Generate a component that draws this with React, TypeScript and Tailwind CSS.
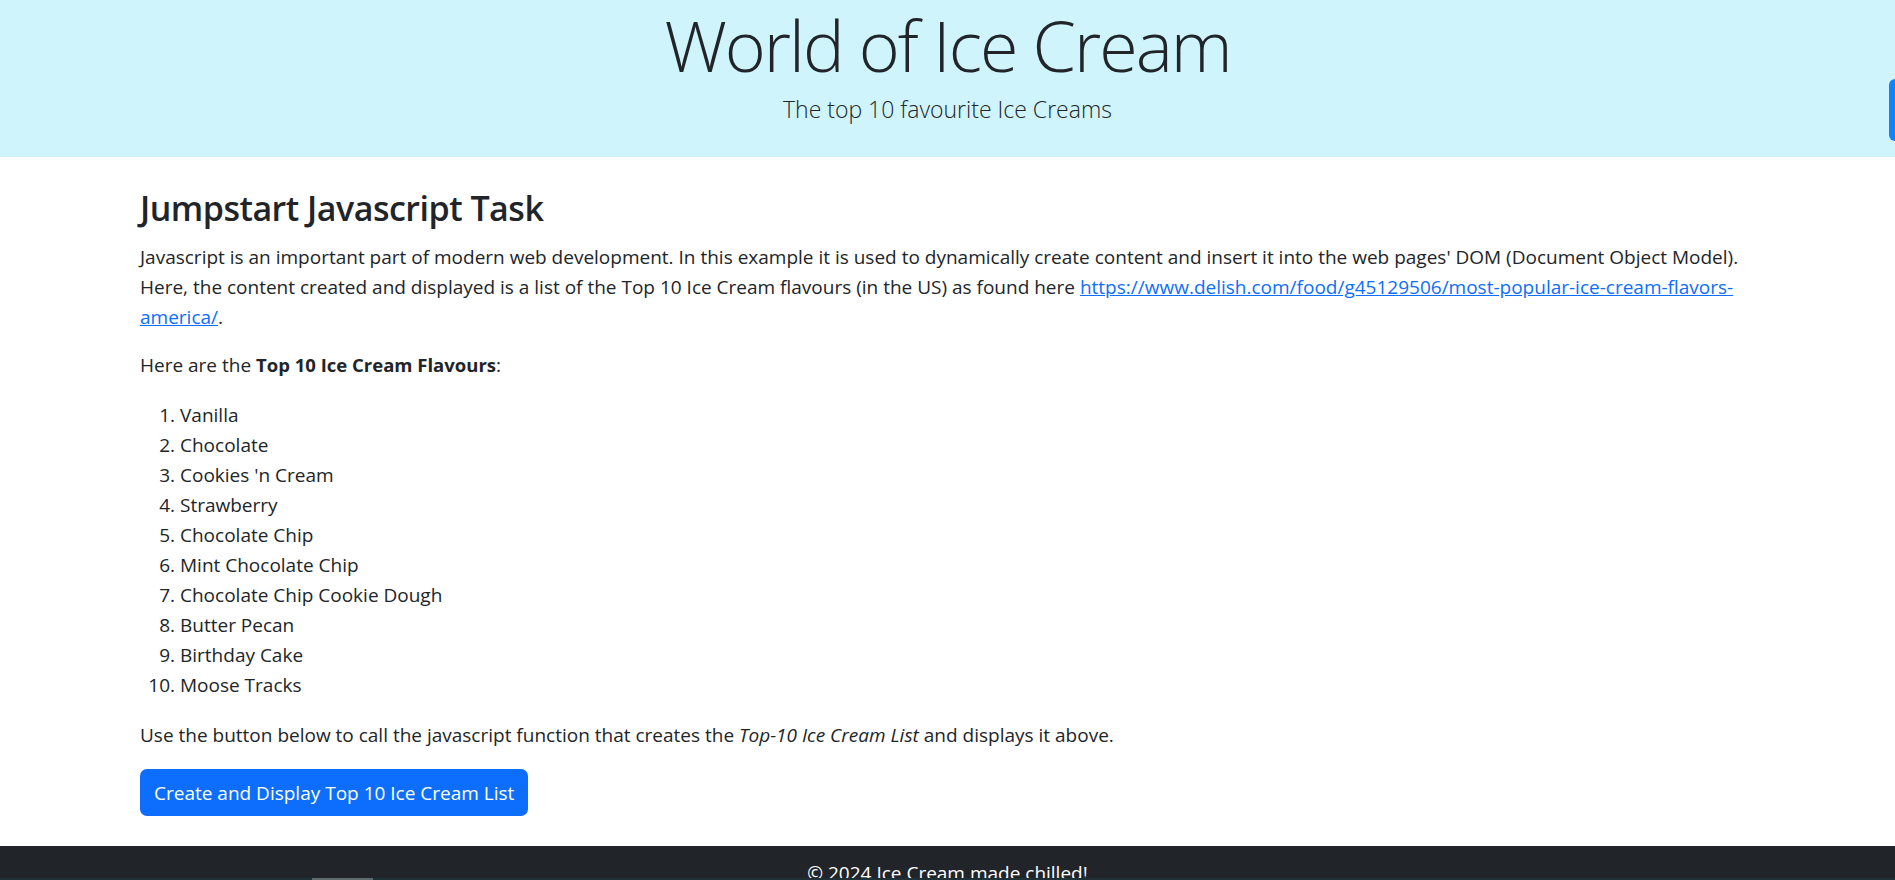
import React from "react";

const flavours = [
  "Vanilla",
  "Chocolate",
  "Cookies 'n Cream",
  "Strawberry",
  "Chocolate Chip",
  "Mint Chocolate Chip",
  "Chocolate Chip Cookie Dough",
  "Butter Pecan",
  "Birthday Cake",
  "Moose Tracks",
];

export default function App() {
  return (
    <div className="font-['Open_Sans',sans-serif] text-[#212529] bg-white">
      <header className="h-[157px] bg-[#cff4fc] flex flex-col items-center">
        <h1 className="mt-[10px] text-[70px] leading-[70px] font-light tracking-[-2px]">World of Ice Cream</h1>
        <p className="mt-[14px] text-[23px] leading-[30px] font-light">The top 10 favourite Ice Creams</p>
      </header>

      <main className="ml-[140px] w-[1620px]">
        <h2 className="mt-[27px] text-[34px] leading-[48px] font-semibold tracking-[-0.5px]">Jumpstart Javascript Task</h2>
        <p className="mt-[10px] mb-[18px] text-[19px] leading-[30px]">
          Javascript is an important part of modern web development. In this example it is used to dynamically create content and insert it into the web pages' DOM (Document Object Model).
          <br />
          Here, the content created and displayed is a list of the Top 10 Ice Cream flavours (in the US) as found here{" "}
          <a href="#" className="text-[#0d6efd] underline">
            https://www.delish.com/food/g45129506/most-popular-ice-cream-flavors-
            <br />
            america/
          </a>
          .
        </p>
        <p className="mb-5 text-[19px] leading-[30px]">
          Here are the <strong className="font-bold text-[18.5px]">Top 10 Ice Cream Flavours</strong>:
        </p>
        <ol className="mb-5 pl-[40px] list-decimal text-[19px] leading-[30px]">
          {flavours.map((f) => (
            <li key={f}>{f}</li>
          ))}
        </ol>
        <p className="mb-[19px] text-[19px] leading-[30px]">
          Use the button below to call the javascript function that creates the <em>Top-10 Ice Cream List</em> and displays it above.
        </p>
        <button className="mb-[30px] h-[47px] px-[14px] rounded-[7px] bg-[#0d6efd] text-white text-[19px] leading-[30px]">
          Create and Display Top 10 Ice Cream List
        </button>
      </main>

      <footer className="bg-[#212529] text-white text-center pt-[12px] pb-[12px] text-[19px] leading-[30px]">
        © 2024 Ice Cream made chilled!
      </footer>

      <div className="fixed right-0 top-[79px] h-[62px] w-[6px] rounded-l-[6px] bg-[#1183fd]" />
      <div className="fixed left-0 right-0 bottom-0 h-[2px] bg-[#1e3136]">
        <div className="ml-[312px] w-[61px] h-full bg-[#5e6a6b]" />
      </div>
    </div>
  );
}
